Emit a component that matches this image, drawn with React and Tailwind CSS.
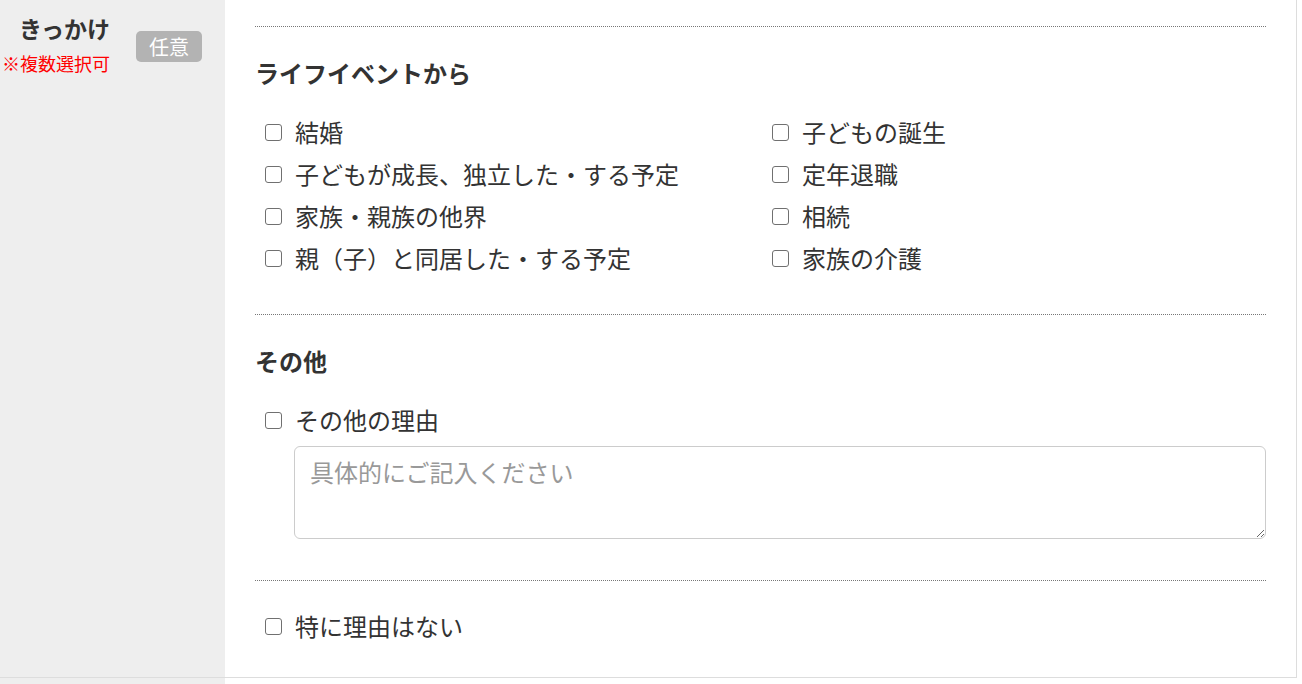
import React from 'react';

const lifeEvents = [
  ['結婚', '子どもの誕生'],
  ['子どもが成長、独立した・する予定', '定年退職'],
  ['家族・親族の他界', '相続'],
  ['親（子）と同居した・する予定', '家族の介護'],
];

function Check({ label }) {
  return (
    <label className="flex items-center h-[42px] pl-[10px] cursor-pointer">
      <span className="w-[17px] h-[17px] shrink-0 border-[1.5px] border-[#707070] rounded-[3px] bg-white" />
      <span className="ml-[13px] whitespace-nowrap">{label}</span>
    </label>
  );
}

export default function App() {
  return (
    <div
      className="w-[1297px] text-[#333] text-[24px] leading-[30px]"
      style={{ fontFamily: '"Noto Sans CJK JP", "Noto Sans", sans-serif' }}
    >
      <div className="flex border-b border-[#dddddd] border-r">
        {/* 見出しセル */}
        <div className="w-[225px] shrink-0 bg-[#eeeeee] pt-[13px]">
          <div className="flex items-start">
            <div className="w-[110px] text-right">
              <div className="text-[23px] font-bold leading-[30px]">きっかけ</div>
              <div className="mt-[9px] text-[18px] leading-[22px] text-[#ff0000] whitespace-nowrap">※複数選択可</div>
            </div>
            <span className="ml-[26px] mt-[18px] w-[66px] h-[31px] rounded-[5px] bg-[#b3b3b3] text-white text-[20px] leading-[31px] text-center">
              任意
            </span>
          </div>
        </div>

        {/* 入力セル */}
        <div className="flex-1 px-[30px] pt-[26px]">
          <section className="border-t border-dotted border-[#777] pt-[31px] pb-[35px]">
            <h3 className="font-bold text-[24px] leading-[30px]">ライフイベントから</h3>
            <div className="grid grid-cols-[507px_1fr] mt-[23px]">
              {lifeEvents.map(([a, b]) => (
                <React.Fragment key={a}>
                  <Check label={a} />
                  <Check label={b} />
                </React.Fragment>
              ))}
            </div>
          </section>

          <section className="border-t border-dotted border-[#777] pt-[31px] pb-[41px]">
            <h3 className="font-bold text-[24px] leading-[30px]">その他</h3>
            <div className="mt-[23px]">
              <Check label="その他の理由" />
            </div>
            <textarea
              className="mt-[5px] ml-[39px] block w-[calc(100%-39px)] h-[93px] border border-[#cccccc] rounded-[6px] px-[15px] py-[10px] text-[24px] leading-[30px] placeholder:text-[#999] outline-none"
              placeholder="具体的にご記入ください"
            />
          </section>

          <section className="border-t border-dotted border-[#777] pt-[24px] pb-[30px]">
            <Check label="特に理由はない" />
          </section>
        </div>
      </div>
      <div className="w-[225px] h-[10px] bg-[#eeeeee]" />
    </div>
  );
}
